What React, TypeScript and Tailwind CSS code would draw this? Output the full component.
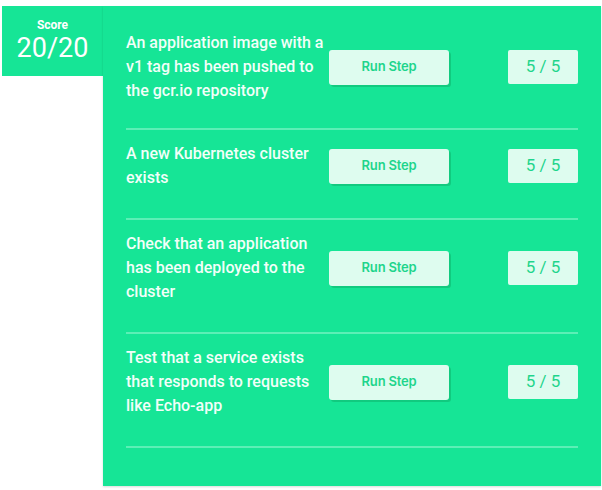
import React from 'react';

const steps = [
  { text: 'An application image with a v1 tag has been pushed to the gcr.io repository', score: '5 / 5' },
  { text: 'A new Kubernetes cluster exists', score: '5 / 5' },
  { text: 'Check that an application has been deployed to the cluster', score: '5 / 5' },
  { text: 'Test that a service exists that responds to requests like Echo-app', score: '5 / 5' },
];

export default function App() {
  return (
    <div className="w-[602px] h-[490px] bg-white flex items-start pt-[6px] pl-[2px] font-['Roboto',sans-serif]">
      <div className="w-[101px] h-[70px] bg-[#16e596] flex flex-col items-center pt-[12px] text-white">
        <span className="text-[12px] font-bold leading-[14px]">Score</span>
        <span className="text-[27px] leading-[30px] mt-[1px]">20/20</span>
      </div>
      <div className="w-[498px] h-[480px] bg-[#16e596] px-[23px] pt-[13px] shadow-[0_1px_2px_rgba(0,0,0,0.15)]">
        {steps.map((s, i) => (
          <div
            key={i}
            className={
              'flex items-center pt-[12px] border-b-2 border-[#5cefb6] ' +
              (i === 0 ? 'pb-[25px]' : 'pb-[28px]')
            }
          >
            <p className="w-[200px] text-[16px] font-medium leading-[24px] text-[#f2fff9]">{s.text}</p>
            <button className="ml-[3px] w-[120px] h-[35px] bg-[#defcef] rounded-[3px] shadow-[2px_2px_0_rgba(14,180,110,0.55)] text-[13px] font-semibold text-[#1ed58c] font-['Inter',sans-serif] tracking-[-0.2px]">
              Run Step
            </button>
            <div className="ml-auto w-[70px] h-[34px] bg-[#defcef] rounded-[2px] flex items-center justify-center text-[17px] text-[#1fd58c]">
              {s.score}
            </div>
          </div>
        ))}
      </div>
    </div>
  );
}
